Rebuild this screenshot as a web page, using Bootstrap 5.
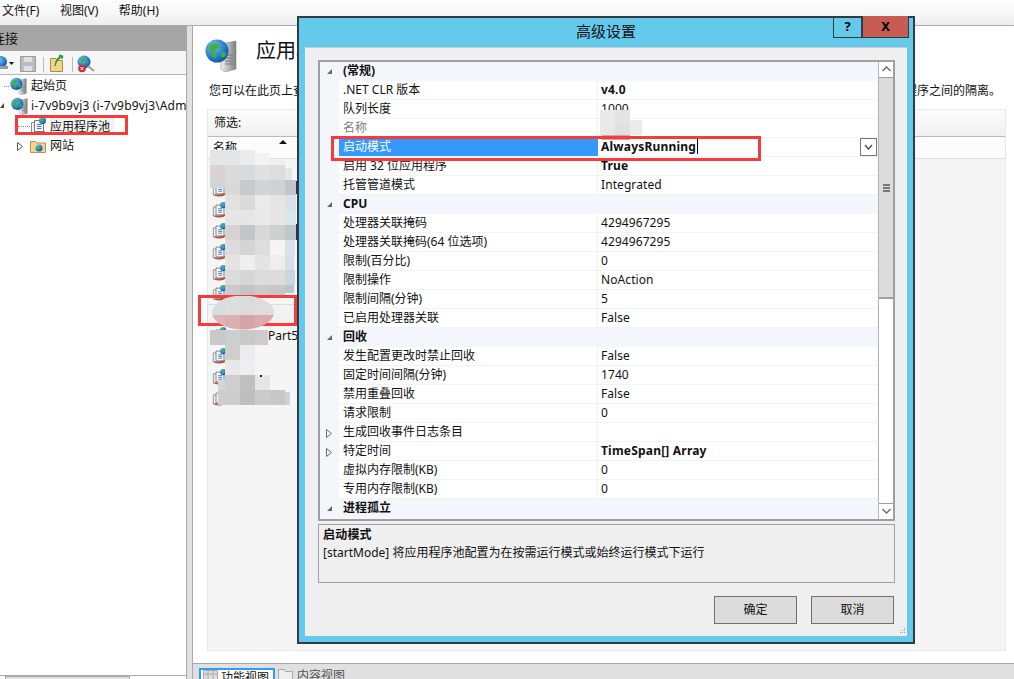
<!DOCTYPE html>
<html lang="zh-CN">
<head>
<meta charset="utf-8">
<title>高级设置</title>
<link href="https://cdn.jsdelivr.net/npm/bootstrap@5.3.0/dist/css/bootstrap.min.css" rel="stylesheet">
<style>
html,body{height:679px;overflow:hidden}
body{font:12px/19px "Noto Sans","Noto Sans CJK SC",sans-serif;color:#111;background:#fff;position:relative;width:1014px}
.menu-strip{height:26px;background:linear-gradient(#fff,#eee);border-bottom:1px solid #aaa;padding-left:2px;gap:20.5px;line-height:22px;flex:none}
.work{height:653px;flex:none}
.conn{width:186px;flex:none;overflow:hidden}
.conn-head{height:25px;background:#a6a6a6;font-size:13px;line-height:25px;margin-bottom:0;text-indent:-8px;flex:none}
.conn-tools{height:24px;background:#f6f6f6;border-bottom:1px solid #b5b5b5;flex:none;position:relative}
.tree{flex:1;padding-top:1px}
.tree-row{height:20px;line-height:20px;white-space:nowrap;position:relative;display:flex;align-items:center}
.tree-row svg{flex:none}
.dots{border-top:1px dotted #888;flex:none;height:0}
.tree-sel{background:#f2f2f2;padding-right:4px;line-height:17px}
.split{width:7px;flex:none;background:#e0e0e0;border-left:1px solid #a8a8a8;border-right:1px solid #a8a8a8}
.right-col{flex:1;min-width:0}
.feature{flex:1;padding:12px 8px 12px 14px;min-width:0;background:#fff;border-bottom:1px solid #a8a8a8}
.fea-title{font-size:20px;line-height:28px;height:40px;gap:17px;flex:none;margin-left:-2px}
.fea-title span{margin-top:-1px}
.fea-desc{height:30px;line-height:24px;white-space:nowrap;margin-top:1px;padding-left:2px;flex:none}
.fea-panel{flex:1;background:#f5f5f5;border:1px solid #e8e8e8}
.fea-filter{height:27px;line-height:25px;background:linear-gradient(#fdfdfd,#f0f0f0);padding-left:6px;border-bottom:1px solid #bbb;flex:none}
.fea-head{height:22px;line-height:22px;background:#fcfcfc;padding-left:5px;border-bottom:1px solid #ddd;position:relative;flex:none}
.sort{position:absolute;left:71px;top:3px;border:4px solid transparent;border-bottom:4px solid #111;border-top:0}
.pool-list{padding:22px 0 0 3px}
.pool-list svg{display:block;margin-bottom:4.9px}
.statusbar{height:15px;background:#e0e0e0;flex:none}
.tab-on{width:76px;height:16px;margin:4px 3px 0 6px;border:2px solid #3399ff;border-bottom:0;background:#fff;line-height:15px;padding-left:2px;gap:3px;overflow:hidden}
.tab-off{line-height:15px;margin-top:4px;gap:4px;color:#555}
.left-foot{height:4px;border-top:1px solid #aaa;background:#fff;flex:none;padding-left:5px}
.left-foot i{display:block;width:125px;height:3px;background:#e0e0e0;border:1px solid #aaa;border-bottom:0}
.dlg{position:absolute;left:297px;top:16px;width:618px;height:628px;background:#65c9ec;border:2px solid #2f3c44;padding:0 6px 6px}
.dlg-title{height:29px;flex:none;font-size:15px;line-height:26px;text-align:center;position:relative}
.cap-q,.cap-x{position:absolute;top:-2px;height:22px;border:1px solid #2f3c44;border-top:0;font-weight:700;line-height:21px;font-size:13px;color:#000;text-align:center}
.cap-q{right:45px;width:29px}
.cap-x{right:-2px;width:47px;background:#c75c52}
.dlg-body{background:#efefef;flex:1;padding:12px 12px 0 13px;position:relative;border-top:1px solid #c0d0d8}
.pg{height:461px;border:2px solid #a0a0a0;border-right:0;background:#f3f6fb;flex:none;overflow:hidden;width:577px}
.pg-rows{width:557px;overflow:hidden;flex:none}
.sec,.prop{height:19px;line-height:18px;white-space:nowrap;position:relative}
.sec{font-weight:700;padding-left:23px;background:#f3f6fb}
.prop{margin-left:19px;background:#fff;border-bottom:1px solid #f1f3f8;padding-left:4px}
.prop-k{width:255px;flex:none;border-right:1px solid #f1f3f8;margin-right:3px;height:18px}
.prop-v{flex:1;letter-spacing:.08px}
.fw-v{font-weight:700;letter-spacing:.2px}
.muted-k{color:#808080}
.sel-k{background:#3399ff;color:#fff;margin-left:-4px;padding-left:4px;width:259px;border-right:0}
.ex-t{position:absolute;left:6px;top:6px}
.caret-v{border-right:1px solid #000;display:inline-block;padding-right:1px;height:15px;line-height:15px}
.combo-btn{position:absolute;right:0;top:0;width:17px;height:18px;border:1px solid #777;background:#fff}
.vscroll{width:17px;flex:none;background:#fff;border-left:1px solid #b5b5b5;border-right:2px solid #a0a0a0;margin-left:1px;position:relative}
.vs-up,.vs-dn{height:16px;background:#fff;text-align:center;line-height:12px}
.vs-up{border-bottom:1px solid #a0a0a0}
.vs-th{height:221px;background:#dcdcdc;border-bottom:2px solid #a0a0a0;display:flex;align-items:center;justify-content:center}
.vs-fill{flex:1}
.vs-dn{border-top:1px solid #a0a0a0}
.desc-box{height:59px;width:577px;margin-top:3px;border:1px solid #a0a0a0;padding:1px 4px;flex:none;line-height:18px}
.dlg-btns{margin-top:13px;gap:14px;padding-right:1px;width:577px;flex:none}
.btn-win{width:83px;height:28px;background:#dcdcdc;border:1px solid #707070;border-radius:0;font-size:12px;line-height:26px;padding:0;color:#111}
.grip{position:absolute;right:1px;bottom:1px}
.hl{position:absolute;border:3px solid #f73a3a;pointer-events:none}
.hl-a{left:15px;top:115px;width:113px;height:20px}
.hl-b{left:198px;top:295px;width:99px;height:31px}
.hl-c{left:331px;top:136px;width:430px;height:25px;z-index:6}
.mosaic{position:absolute;left:205px;top:145px}
.mosaic2{position:absolute;left:598px;top:108px;z-index:5}
.part{position:absolute;left:268px;top:326px}
.row-sel{position:absolute;left:207px;top:304px;width:90px;height:22px;background:#f2f2f2;border:1px solid #ddd}
</style>
</head>
<body>
<svg width="0" height="0" class="position-absolute">
<defs>
<radialGradient id="glb" cx=".35" cy=".3" r=".8"><stop offset="0" stop-color="#7cc4f4"/><stop offset=".7" stop-color="#1b6fc4"/><stop offset="1" stop-color="#114b8e"/></radialGradient>
<linearGradient id="srvg" x1="0" x2="1"><stop offset="0" stop-color="#f4f4f4"/><stop offset="1" stop-color="#7c7c7c"/></linearGradient>
<clipPath id="ell"><ellipse cx="243" cy="312.500" rx="31" ry="17"/></clipPath>
<symbol id="ic-srv" viewBox="0 0 34 34">
<path d="M16 6l15-3v28l-11 3-4-3z" fill="url(#srvg)" stroke="#8a8a8a" stroke-width=".6"/>
<path d="M20 17h8M20 20h8M20 23h8M20 26h8" stroke="#777"/>
<circle cx="12" cy="13" r="11.500" fill="url(#glb)"/>
<path d="M5 7c4-3 8-2 10 1-1 3-4 2-5 5 0 3 2 4 1 7-3 1-4-3-5-6-1-2-3-3-1-7z" fill="#3cb13c"/>
<path d="M17 14c3-1 4 1 4 3-1 2-3 3-5 2 0-2 0-3 1-5z" fill="#3cb13c"/>
</symbol>
<symbol id="ic-pool" viewBox="0 0 18 18">
<ellipse cx="8" cy="15" rx="7" ry="2.400" fill="#cf3a2a"/>
<path d="M1.500 5.500h8v10h-8z" fill="#f2f2f2" stroke="#8d8d8d"/>
<path d="M4.500 3.500h9v11h-9z" fill="#fafafa" stroke="#777"/>
<path d="M7 7.500h4.500M7 9.500h4.500M7 11.500h4.500" stroke="#3c78b8"/>
<circle cx="12.500" cy="3.500" r="3.500" fill="url(#glb)"/>
<path d="M10.500 2c1-1 2-1 3 0l-1 2-2 .500zM15 3l1 1-1 2z" fill="#3cb13c"/>
</symbol>
<symbol id="ic-folder" viewBox="0 0 16 14">
<path d="M.5 2.500h5l1.500 1.500h8.500v9.500h-15z" fill="#f2d68a" stroke="#b49450"/>
<circle cx="9" cy="9" r="3.500" fill="url(#glb)"/>
<path d="M7 7.500l3-.500 0 2-2 2z" fill="#3cb13c"/>
</symbol>
</defs>
</svg>

<div class="d-flex flex-column h-100">
  <div class="menu-strip d-flex"><span>文件(F)</span><span>视图(V)</span><span>帮助(H)</span></div>
  <div class="work d-flex">
    <div class="conn d-flex flex-column">
      <div class="conn-head">连接</div>
      <div class="conn-tools">
        <svg width="186" height="23" viewBox="0 0 186 23">
          <circle cx="1" cy="11" r="6" fill="url(#glb)"/><path d="M0 15h8v3H0z" fill="#9a9a9a"/>
          <path d="M9 11h5l-2.500 3z" fill="#111"/>
          <path d="M20.500 5.500h15v15h-15z" fill="#bdbdbd" stroke="#9a9a9a"/><path d="M24 6h8v5h-8zM24 15h8v5h-8z" fill="#e2e2e2"/>
          <path d="M43.500 6v15" stroke="#bbb"/>
          <path d="M50.500 7.500h5l2 2h5v11h-12z" fill="#f3d58a" stroke="#a98b4e"/><path d="M55 15c1-4 3-6 6-9l1 2 1-3-4-1 1 1c-3 2-5 6-5 10z" fill="#33a033" stroke="#33a033"/>
          <path d="M72.500 6v15" stroke="#bbb"/>
          <circle cx="84" cy="11" r="6.500" fill="url(#glb)"/><path d="M80 8l4-2 1 3-3 3zM87 10l2 1-2 3z" fill="#3cb13c"/>
          <path d="M88 15l6 5" stroke="#9a9a9a" stroke-width="2"/>
          <circle cx="82" cy="17.500" r="3.800" fill="#cf2b2b"/><path d="M80.500 16l3 3M83.500 16l-3 3" stroke="#fff"/>
        </svg>
      </div>
      <div class="tree">
        <div class="tree-row"><span class="dots ms-1" style="width:5px"></span><svg width="18" height="18" class="me-1" style="margin-left:1px"><use href="#ic-srv"/></svg><span style="margin-left:-1px">起始页</span></div>
        <div class="tree-row"><svg width="4" height="6" class="me-1"><path d="M4 0v5H0z" fill="#444"/></svg><svg width="18" height="18" class="me-1" style="margin-left:3px"><use href="#ic-srv"/></svg><span style="margin-left:-2px;letter-spacing:.15px">i-7v9b9vj3 (i-7v9b9vj3\Administrator)</span></div>
        <div class="tree-row"><span class="dots" style="width:12px;margin-left:18px"></span><svg width="18" height="18" style="margin-right:2px"><use href="#ic-pool"/></svg><span class="tree-sel">应用程序池</span></div>
        <div class="tree-row"><svg width="7" height="9" style="margin-left:17px;margin-right:6px"><path d="M.5.500l5 4-5 4z" fill="#fff" stroke="#555"/></svg><svg width="16" height="14" style="margin-right:4px"><use href="#ic-folder"/></svg><span>网站</span></div>
      </div>
      <div class="left-foot"><i></i></div>
    </div>
    <div class="split"></div>
    <div class="right-col d-flex flex-column">
      <div class="feature d-flex flex-column">
        <div class="fea-title d-flex"><svg width="34" height="34" class="flex-none"><use href="#ic-srv"/></svg><span>应用程序池</span></div>
        <div class="fea-desc">您可以在此页上查看和管理服务器上的应用程序池列表。应用程序池与工作进程相关联&#xFF0C;包含一个或多个应用程序&#xFF0C;并提供不同应用程序之间的隔离。</div>
        <div class="fea-panel d-flex flex-column">
          <div class="fea-filter">筛选:</div>
          <div class="fea-head">名称<span class="sort"></span></div>
          <div class="pool-list">
            <svg width="18" height="16"><use href="#ic-pool"/></svg>
            <svg width="18" height="16"><use href="#ic-pool"/></svg>
            <svg width="18" height="16"><use href="#ic-pool"/></svg>
            <svg width="18" height="16"><use href="#ic-pool"/></svg>
            <svg width="18" height="16"><use href="#ic-pool"/></svg>
            <svg width="18" height="16"><use href="#ic-pool"/></svg>
            <svg width="18" height="16"><use href="#ic-pool"/></svg>
            <svg width="18" height="16"><use href="#ic-pool"/></svg>
            <svg width="18" height="16"><use href="#ic-pool"/></svg>
            <svg width="18" height="16"><use href="#ic-pool"/></svg>
            <svg width="18" height="16"><use href="#ic-pool"/></svg>
          </div>
        </div>
      </div>
      <div class="statusbar d-flex">
        <div class="tab-on d-flex"><svg width="15" height="12" class="flex-none"><path d="M.5.500h14v11H.5z" fill="#ddd" stroke="#aaa"/><path d="M1 4h13M5 1v11M10 1v11" stroke="#aaa"/></svg><span>功能视图</span></div>
        <div class="tab-off d-flex"><svg width="15" height="12" class="flex-none"><path d="M.5 1.500h6l1 2h7v8H.5z" fill="#eee" stroke="#aaa"/></svg><span>内容视图</span></div>
      </div>
    </div>
  </div>
</div>

<div class="row-sel"></div>
<span class="part">Part5</span>

<svg class="mosaic" width="95" height="265" viewBox="205 145 95 265">
<g shape-rendering="crispEdges">
<path d="M210 150h15v15h-15zM225 150h15v15h-15z" fill="#e2e6e6"/>
<path d="M240 150h15v15h-15z" fill="#ebebeb"/><path d="M255 153h15v12h-15z" fill="#f3f3f3"/><path d="M270 160h15v5h-15z" fill="#f0f0f0"/>
<rect x="210" y="165" width="15" height="15" fill="#d9d3d3"/><rect x="225" y="165" width="15" height="15" fill="#dcdad8"/><rect x="240" y="165" width="15" height="15" fill="#d9dade"/><rect x="255" y="165" width="15" height="15" fill="#e0e0e0"/><rect x="270" y="165" width="15" height="15" fill="#dcdde0"/><rect x="285" y="168" width="7" height="12" fill="#e4e6e6"/>
<rect x="210" y="180" width="15" height="8" fill="#cfd6d6"/><rect x="225" y="180" width="15" height="15" fill="#d9d9d6"/><rect x="240" y="180" width="15" height="15" fill="#c6cacd"/><rect x="255" y="180" width="15" height="15" fill="#d2d3d6"/><rect x="270" y="180" width="15" height="15" fill="#cfd1d3"/><rect x="285" y="180" width="11" height="15" fill="#c0c6ca"/>
<rect x="225" y="195" width="15" height="15" fill="#e1e1e1"/><rect x="240" y="195" width="15" height="15" fill="#dadada"/><rect x="255" y="195" width="15" height="15" fill="#ebebeb"/><rect x="270" y="195" width="15" height="15" fill="#e5e5e5"/><rect x="285" y="195" width="11" height="15" fill="#d8e2e8"/>
<rect x="225" y="210" width="15" height="15" fill="#e6e6e6"/><rect x="240" y="210" width="15" height="15" fill="#e6e6e6"/><rect x="255" y="210" width="15" height="15" fill="#e9e9e9"/><rect x="270" y="210" width="15" height="15" fill="#e6e6e6"/><rect x="285" y="210" width="11" height="15" fill="#dbe5ea"/>
<rect x="225" y="225" width="15" height="15" fill="#d6d4d0"/><rect x="240" y="225" width="15" height="15" fill="#c3c6c9"/><rect x="255" y="225" width="15" height="15" fill="#d8d8d8"/><rect x="270" y="225" width="15" height="15" fill="#ced0d0"/><rect x="285" y="225" width="11" height="15" fill="#bfc7cd"/>
<rect x="225" y="240" width="15" height="15" fill="#dcdcdc"/><rect x="240" y="240" width="15" height="15" fill="#d4d4d4"/><rect x="255" y="240" width="15" height="15" fill="#dddddd"/><rect x="270" y="240" width="15" height="15" fill="#f4f4f4"/><rect x="285" y="240" width="10" height="15" fill="#d8e2e8"/>
<rect x="225" y="255" width="15" height="15" fill="#e4e4e4"/><rect x="240" y="255" width="15" height="15" fill="#efefef"/><rect x="255" y="255" width="15" height="15" fill="#e4e4e4"/><rect x="270" y="255" width="15" height="15" fill="#eeeeee"/><rect x="285" y="255" width="9" height="15" fill="#d5dfe5"/>
<rect x="225" y="270" width="15" height="15" fill="#dadbdd"/><rect x="240" y="270" width="15" height="15" fill="#d6d6d6"/><rect x="255" y="270" width="15" height="15" fill="#dcdcdc"/><rect x="270" y="270" width="15" height="15" fill="#dcdcdc"/><rect x="285" y="270" width="10" height="15" fill="#ccd6dc"/>
<rect x="225" y="285" width="15" height="10" fill="#c9cbcb"/><rect x="240" y="285" width="15" height="10" fill="#c4c4c4"/><rect x="255" y="285" width="15" height="10" fill="#cacaca"/><rect x="270" y="285" width="15" height="10" fill="#c8c6c6"/><rect x="285" y="285" width="9" height="8" fill="#b9c6cc"/>
</g>
</svg>

<div class="hl hl-a"></div>
<div class="hl hl-b"></div>

<svg class="mosaic" width="95" height="265" viewBox="205 145 95 265">
<g clip-path="url(#ell)" shape-rendering="crispEdges">
<rect x="205" y="296" width="20" height="19" fill="#d5dede"/><rect x="225" y="296" width="15" height="19" fill="#dcdddd"/><rect x="240" y="296" width="15" height="19" fill="#dbdbdb"/><rect x="255" y="296" width="25" height="19" fill="#dddddd"/>
<rect x="205" y="315" width="20" height="15" fill="#e0b5b5"/><rect x="225" y="315" width="15" height="15" fill="#dcaeae"/><rect x="240" y="315" width="15" height="15" fill="#d2a6a6"/><rect x="255" y="315" width="25" height="15" fill="#dbabab"/>
</g>
<g shape-rendering="crispEdges">
<rect x="210" y="330" width="15" height="15" fill="#cac8c8"/><rect x="225" y="330" width="15" height="15" fill="#cbcfcf"/><rect x="240" y="330" width="15" height="15" fill="#c9c9c9"/><rect x="255" y="330" width="13" height="15" fill="#cecccc"/>
<rect x="225" y="345" width="15" height="15" fill="#cfd0ce"/><rect x="240" y="345" width="15" height="15" fill="#ecebef"/>
<rect x="225" y="360" width="15" height="15" fill="#e8e8e8"/><rect x="240" y="360" width="15" height="15" fill="#eeeef0"/>
<rect x="225" y="375" width="15" height="15" fill="#cecece"/><rect x="240" y="375" width="15" height="15" fill="#bfbfbf"/><rect x="255" y="375" width="15" height="15" fill="#e6e6ea"/><rect x="218" y="380" width="7" height="10" fill="#d6d6d6"/>
<rect x="218" y="390" width="7" height="15" fill="#cdcdcd"/><rect x="225" y="390" width="15" height="15" fill="#cdcdcd"/><rect x="240" y="390" width="15" height="15" fill="#bebebe"/><rect x="255" y="390" width="15" height="15" fill="#cbcbcb"/><rect x="270" y="390" width="15" height="15" fill="#c8c8c8"/><rect x="285" y="392" width="5" height="13" fill="#c9d4d8"/>
<rect x="296" y="181" width="1" height="13" fill="#4b1c5c"/><rect x="296" y="224" width="1" height="16" fill="#4b1c5c"/><rect x="260" y="375" width="2" height="2" fill="#223"/>
</g>
</svg>

<div class="dlg d-flex flex-column">
  <div class="dlg-title">高级设置<span class="cap-q">?</span><span class="cap-x">X</span></div>
  <div class="dlg-body d-flex flex-column">
    <div class="pg d-flex">
      <div class="pg-rows">
        <div class="sec"><svg class="ex-t" width="7" height="7"><path d="M6 1v5H1z" fill="#666"/></svg>(常规)</div>
        <div class="prop d-flex"><div class="prop-k">.NET CLR 版本</div><div class="prop-v fw-v">v4.0</div></div>
        <div class="prop d-flex"><div class="prop-k">队列长度</div><div class="prop-v">1000</div></div>
        <div class="prop d-flex"><div class="prop-k muted-k">名称</div><div class="prop-v"></div></div>
        <div class="prop d-flex"><div class="prop-k sel-k">启动模式</div><div class="prop-v fw-v"><span class="caret-v">AlwaysRunning</span></div>
          <span class="combo-btn"><svg class="d-block" width="15" height="16"><path d="M4 6l3.500 4L11 6" fill="none" stroke="#555" stroke-width="1.500"/></svg></span></div>
        <div class="prop d-flex"><div class="prop-k">启用 32 位应用程序</div><div class="prop-v fw-v">True</div></div>
        <div class="prop d-flex"><div class="prop-k">托管管道模式</div><div class="prop-v">Integrated</div></div>
        <div class="sec"><svg class="ex-t" width="7" height="7"><path d="M6 1v5H1z" fill="#666"/></svg>CPU</div>
        <div class="prop d-flex"><div class="prop-k">处理器关联掩码</div><div class="prop-v">4294967295</div></div>
        <div class="prop d-flex"><div class="prop-k">处理器关联掩码(64 位选项)</div><div class="prop-v">4294967295</div></div>
        <div class="prop d-flex"><div class="prop-k">限制(百分比)</div><div class="prop-v">0</div></div>
        <div class="prop d-flex"><div class="prop-k">限制操作</div><div class="prop-v">NoAction</div></div>
        <div class="prop d-flex"><div class="prop-k">限制间隔(分钟)</div><div class="prop-v">5</div></div>
        <div class="prop d-flex"><div class="prop-k">已启用处理器关联</div><div class="prop-v">False</div></div>
        <div class="sec"><svg class="ex-t" width="7" height="7"><path d="M6 1v5H1z" fill="#666"/></svg>回收</div>
        <div class="prop d-flex"><div class="prop-k">发生配置更改时禁止回收</div><div class="prop-v">False</div></div>
        <div class="prop d-flex"><div class="prop-k">固定时间间隔(分钟)</div><div class="prop-v">1740</div></div>
        <div class="prop d-flex"><div class="prop-k">禁用重叠回收</div><div class="prop-v">False</div></div>
        <div class="prop d-flex"><div class="prop-k">请求限制</div><div class="prop-v">0</div></div>
        <div class="prop d-flex"><svg class="ex-t" style="left:-13px" width="7" height="9"><path d="M.5.500l5 4-5 4z" fill="#fff" stroke="#666"/></svg><div class="prop-k">生成回收事件日志条目</div><div class="prop-v"></div></div>
        <div class="prop d-flex"><svg class="ex-t" style="left:-13px" width="7" height="9"><path d="M.5.500l5 4-5 4z" fill="#fff" stroke="#666"/></svg><div class="prop-k">特定时间</div><div class="prop-v fw-v">TimeSpan[] Array</div></div>
        <div class="prop d-flex"><div class="prop-k">虚拟内存限制(KB)</div><div class="prop-v">0</div></div>
        <div class="prop d-flex"><div class="prop-k">专用内存限制(KB)</div><div class="prop-v">0</div></div>
        <div class="sec"><svg class="ex-t" width="7" height="7"><path d="M6 1v5H1z" fill="#666"/></svg>进程孤立</div>
      </div>
      <div class="vscroll d-flex flex-column">
        <div class="vs-up"><svg width="11" height="12"><path d="M1.500 8L5.500 4l4 4" fill="none" stroke="#666" stroke-width="1.300"/></svg></div>
        <div class="vs-th"><svg width="9" height="8"><path d="M1 1h7M1 4h7M1 7h7" stroke="#555" stroke-width="1.500"/></svg></div>
        <div class="vs-fill"></div>
        <div class="vs-dn"><svg width="11" height="12"><path d="M1.500 4l4 4 4-4" fill="none" stroke="#666" stroke-width="1.300"/></svg></div>
      </div>
    </div>
    <div class="desc-box"><div class="fw-v">启动模式</div><div>[startMode] 将应用程序池配置为在按需运行模式或始终运行模式下运行</div></div>
    <div class="dlg-btns d-flex justify-content-end"><button type="button" class="btn btn-win">确定</button><button type="button" class="btn btn-win">取消</button></div>
    <svg class="grip" width="8" height="8"><path d="M6 1h1v1H6zM4 3h1v1H4zM6 3h1v1H6zM2 5h1v1H2zM4 5h1v1H4zM6 5h1v1H6z" fill="#999"/></svg>
  </div>
</div>

<svg class="mosaic2" width="48" height="34" viewBox="598 108 48 34">
<g shape-rendering="crispEdges"><rect x="600" y="110" width="15" height="15" fill="#e9e9e9"/><rect x="615" y="110" width="15" height="15" fill="#e4e4e4"/><rect x="600" y="125" width="15" height="10" fill="#e8e8e8"/><rect x="615" y="125" width="15" height="10" fill="#e0e0e0"/><rect x="630" y="120" width="12" height="15" fill="#ebebeb"/><rect x="602" y="135" width="28" height="5" fill="#c9a6a6"/></g>
</svg>
<div class="hl hl-c"></div>
</body>
</html>
